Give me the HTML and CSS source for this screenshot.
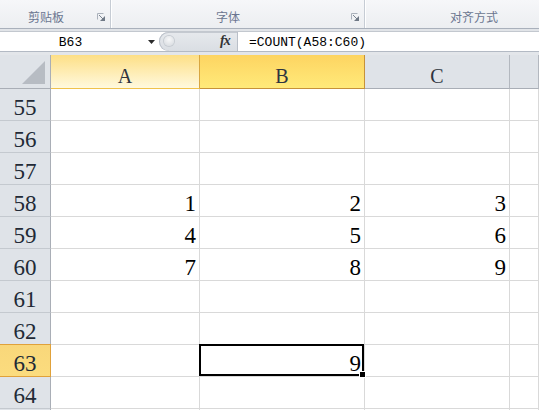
FILE: index.html
```html
<!DOCTYPE html>
<html lang="zh-CN">
<head>
<meta charset="utf-8">
<title>Excel</title>
<link rel="stylesheet" href="styles.css">
</head>
<body>
<div class="app">
  <div class="ribbon">
    <div class="group g1">
      <span class="glabel">剪贴板</span>
      <svg class="launcher" width="8" height="8" viewBox="0 0 8 8"><path d="M0.5 6.5V0.5H6.5" fill="none" stroke="#aab1bb"/><path d="M2 2L6 6" stroke="#7a8491"/><path d="M3 8H8V3Z" fill="#6f7986"/></svg>
    </div>
    <div class="group g2">
      <span class="glabel">字体</span>
      <svg class="launcher" width="8" height="8" viewBox="0 0 8 8"><path d="M0.5 6.5V0.5H6.5" fill="none" stroke="#aab1bb"/><path d="M2 2L6 6" stroke="#7a8491"/><path d="M3 8H8V3Z" fill="#6f7986"/></svg>
    </div>
    <div class="group g3">
      <span class="glabel">对齐方式</span>
    </div>
  </div>
  <div class="strip"></div>
  <div class="fbar">
    <div class="namebox">
      <span class="name">B63</span>
      <svg class="dd" width="7" height="4" viewBox="0 0 7 4"><path d="M0 0H7L3.5 4Z" fill="#2b2b2b"/></svg>
    </div>
    <div class="fmid">
      <span class="knob"></span>
      <span class="fx">fx</span>
    </div>
    <div class="finput">=COUNT(A58:C60)</div>
  </div>
  <div class="strip2"></div>
  <div class="sheet">
    <div class="corner"><svg width="24" height="24" viewBox="0 0 24 24"><path d="M23 0V23H0Z" fill="#b7bcc3"/></svg></div>
    <div class="ch ch-a">A</div>
    <div class="ch ch-b">B</div>
    <div class="ch">C</div>
    <div class="ch ch-d"></div>

    <div class="rh">55</div><div class="c"></div><div class="c"></div><div class="c"></div><div class="c"></div>
    <div class="rh">56</div><div class="c"></div><div class="c"></div><div class="c"></div><div class="c"></div>
    <div class="rh">57</div><div class="c"></div><div class="c"></div><div class="c"></div><div class="c"></div>
    <div class="rh">58</div><div class="c">1</div><div class="c">2</div><div class="c">3</div><div class="c"></div>
    <div class="rh">59</div><div class="c">4</div><div class="c">5</div><div class="c">6</div><div class="c"></div>
    <div class="rh">60</div><div class="c">7</div><div class="c">8</div><div class="c">9</div><div class="c"></div>
    <div class="rh">61</div><div class="c"></div><div class="c"></div><div class="c"></div><div class="c"></div>
    <div class="rh">62</div><div class="c"></div><div class="c"></div><div class="c"></div><div class="c"></div>
    <div class="rh rh-sel">63</div><div class="c"></div><div class="c active">9<span class="selbox"><span class="handle"></span></span></div><div class="c"></div><div class="c"></div>
    <div class="rh">64</div><div class="c"></div><div class="c"></div><div class="c"></div><div class="c"></div>
    <div class="rh"></div><div class="c"></div><div class="c"></div><div class="c"></div><div class="c"></div>
  </div>
</div>
</body>
</html>
```
FILE: styles.css
```css
html, body {
  margin: 0;
  padding: 0;
  background: #ffffff;
}
.app {
  width: 539px;
  height: 410px;
  overflow: hidden;
  display: flex;
  flex-direction: column;
}
.ribbon {
  height: 28px;
  flex: none;
  display: flex;
  background: linear-gradient(#f6f7f9, #eceef1);
  border-bottom: 1px solid #a9b0bb;
}
.group {
  position: relative;
  display: flex;
  align-items: flex-end;
  padding-bottom: 3px;
  box-sizing: border-box;
}
.g1 {
  width: 111px;
  border-right: 1px solid #c6ccd4;
  box-shadow: 1px 0 0 #ffffff;
  padding-left: 28px;
}
.g2 {
  width: 254px;
  border-right: 1px solid #c6ccd4;
  box-shadow: 1px 0 0 #ffffff;
  padding-left: 105px;
}
.g3 {
  flex: 1;
  padding-left: 85px;
}
.glabel {
  font-family: "Noto Sans CJK SC", sans-serif;
  font-size: 12px;
  line-height: 17px;
  color: #6b7690;
}
.launcher {
  position: absolute;
  right: 5px;
  top: 13px;
}
.strip {
  height: 2px;
  flex: none;
  background: #e1e4e8;
}
.fbar {
  height: 21px;
  flex: none;
  box-sizing: border-box;
  display: flex;
  border-top: 1px solid #c3c8cf;
  border-bottom: 1px solid #b3bac4;
}
.namebox {
  width: 159px;
  position: relative;
  background: #ffffff;
  font-family: "Liberation Mono", "Courier New", monospace;
  font-size: 13px;
  line-height: 16px;
  padding-top: 3px;
  box-sizing: border-box;
  text-align: center;
  color: #000;
}
.name {
  display: inline-block;
  margin-left: -18px;
}
.dd {
  position: absolute;
  left: 148px;
  top: 8px;
}
.fmid {
  width: 78px;
  position: relative;
  background: linear-gradient(#e6e9ed, #dadee3);
  border-radius: 10px 0 0 10px;
  box-shadow: inset 1px 0 0 #b9bfc8, inset 0 1px 0 #c4c9d0;
}
.knob {
  position: absolute;
  left: 5px;
  top: 4px;
  width: 10px;
  height: 10px;
  border-radius: 50%;
  background: radial-gradient(circle at 50% 35%, #f7f8f9, #d4d8dd);
  box-shadow: 0 0 0 1px #c7ccd2;
}
.fx {
  position: absolute;
  left: 61px;
  top: 0;
  font-family: "Liberation Serif", serif;
  font-style: italic;
  font-weight: bold;
  font-size: 14px;
  line-height: 18px;
  letter-spacing: -1px;
  color: #333;
}
.finput {
  flex: 1;
  background: #ffffff;
  border-left: 1px solid #b9bfc8;
  font-family: "Liberation Mono", "Courier New", monospace;
  font-size: 13px;
  line-height: 16px;
  padding-top: 3px;
  padding-left: 11px;
  color: #000;
  white-space: nowrap;
}
.strip2 {
  height: 3px;
  flex: none;
  background: #e3e6ea;
}
.sheet {
  flex: none;
  display: grid;
  grid-template-columns: 51px 149px 165px 145px 1fr;
  grid-template-rows: 34px repeat(11, 32px);
}
.sheet > div {
  box-sizing: border-box;
  border-right: 1px solid #d9d9d9;
  border-bottom: 1px solid #d9d9d9;
}
.corner {
  background: #dfe3e8;
  border-right-color: #a9aeb6 !important;
  border-bottom-color: #a9aeb6 !important;
  display: flex;
  align-items: flex-end;
  justify-content: flex-end;
  padding: 0 4px 3px 0;
}
.corner svg {
  display: block;
}
.ch {
  background: #dfe3e8;
  border-right-color: #b3b8bf !important;
  border-bottom-color: #a9aeb6 !important;
  text-align: center;
  font-family: "Liberation Serif", serif;
  font-size: 20px;
  line-height: 20px;
  padding-top: 11px;
  color: #2e3440;
}
.ch-a {
  background: linear-gradient(#fddf86, #fff9de);
  border-bottom-color: #f0c24c !important;
  border-right-color: #d8a640 !important;
}
.ch-b {
  background: linear-gradient(#fdd461, #ffea7a);
  border-bottom-color: #c6923a !important;
  border-right-color: #c6923a !important;
}
.rh {
  background: #dfe3e8;
  border-right-color: #a9aeb6 !important;
  border-bottom-color: #c4c9cf !important;
  text-align: center;
  font-family: "Liberation Serif", serif;
  font-size: 23px;
  line-height: 23px;
  padding-top: 7px;
  color: #222a36;
}
.rh-sel {
  background: linear-gradient(#f9d77a, #fbdc7e);
  border-right-color: #e0a13a !important;
  border-bottom-color: #e0a13a !important;
  box-shadow: 0 -1px 0 #e0a13a;
}
.c {
  background: #ffffff;
  text-align: right;
  font-family: "Liberation Serif", serif;
  font-size: 23px;
  line-height: 23px;
  padding: 7px 3px 0 0;
  color: #000;
}
.active {
  position: relative;
}
.selbox {
  position: absolute;
  left: -1px;
  top: -1px;
  right: 0;
  bottom: 0;
  border: 2px solid #000;
}
.handle {
  position: absolute;
  right: -4px;
  bottom: -4px;
  width: 5px;
  height: 5px;
  background: #000;
  border: 1px solid #fff;
}
```
